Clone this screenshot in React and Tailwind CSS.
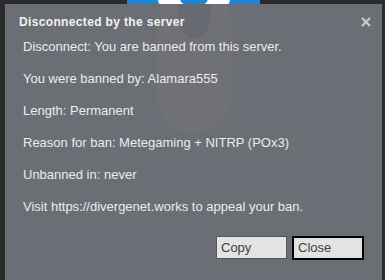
import React from "react";

export default function App() {
  const lines = [
    "Disconnect: You are banned from this server.",
    "You were banned by: Alamara555",
    "Length: Permanent",
    "Reason for ban: Metegaming + NITRP (POx3)",
    "Unbanned in: never",
    "Visit https://divergenet.works to appeal your ban.",
  ];
  return (
    <div
      className="relative w-[385px] h-[280px] overflow-hidden bg-[#2b2b2b]"
      style={{ fontFamily: '"Liberation Sans", Arial, sans-serif' }}
    >
      {/* background logo peeking at the top, behind the dialog */}
      <svg className="absolute left-[127px] top-0" width="133" height="10" viewBox="0 0 133 10">
        <rect x="0" y="0" width="133" height="10" fill="#1f86d6" />
        <rect x="31" y="-10" width="72" height="16" rx="6" fill="#ffffff" />
        <rect x="53" y="-10" width="28" height="15" rx="7" fill="#1f86d6" />
      </svg>

      <div className="relative ml-[5px] mt-[4px] w-[377px] h-[300px] bg-[#6b6e74] overflow-hidden flex flex-col">
        {/* faint ghost of the logo seen through the translucent dialog */}
        <svg className="absolute left-0 top-0" width="377" height="150" viewBox="0 0 377 150">
          <rect x="152" y="-20" width="74" height="150" rx="37" fill="#777879" opacity="0.35" />
          <ellipse cx="189" cy="10" rx="17" ry="24" fill="#60646b" opacity="0.55" />
        </svg>

        <div className="relative flex items-center justify-between pl-[14px] pr-[11px] pt-[9px] h-[26px]">
          <span className="text-[12px] font-bold text-[#f2f2f2] tracking-[0.35px]">
            Disconnected by the server
          </span>
          <svg width="10" height="10" viewBox="0 0 10 10" className="mt-[1px]">
            <path d="M1 1 L9 9 M9 1 L1 9" stroke="#c9c9c9" strokeWidth="2.2" />
          </svg>
        </div>

        <div className="relative flex flex-col pl-[18px] pt-[9px] gap-[16px]">
          {lines.map((l) => (
            <div key={l} className="text-[13px] leading-[16px] text-[#ececec]">
              {l}
            </div>
          ))}
        </div>

        <div className="relative flex justify-end gap-[5px] pr-[18px] mt-[21px]">
          <button className="w-[71px] h-[23px] bg-[#e3e3e3] border border-[#565656] text-left pl-[4px] text-[13px] text-[#404040]">
            Copy
          </button>
          <button className="w-[72px] h-[24px] bg-[#e3e3e3] border-2 border-black text-left pl-[4px] text-[13px] text-[#404040]">
            Close
          </button>
        </div>
      </div>
    </div>
  );
}
